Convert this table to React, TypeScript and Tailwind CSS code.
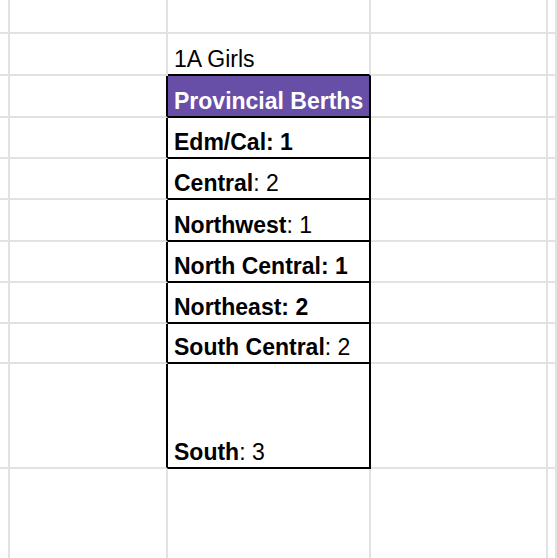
type Entry = { bold: string; rest?: string };

const ROW_HEIGHTS = [34, 42, 42, 41, 41, 42, 41, 41, 40, 105, 100];

const entries: Entry[] = [
  { bold: "Edm/Cal: 1" },
  { bold: "Central", rest: ": 2" },
  { bold: "Northwest", rest: ": 1" },
  { bold: "North Central: 1" },
  { bold: "Northeast: 2" },
  { bold: "South Central", rest: ": 2" },
  { bold: "South", rest: ": 3" },
];

const rowClass = [
  "h-[34px]",
  "h-[42px]",
  "h-[42px]",
  "h-[41px]",
  "h-[41px]",
  "h-[42px]",
  "h-[41px]",
  "h-[41px]",
  "h-[40px]",
  "h-[105px]",
  "h-[100px]",
];

function Cell({ className = "", children }: { className?: string; children?: React.ReactNode }) {
  return (
    <div className={`flex items-end border-r-2 border-b-2 border-[#e2e2e3] ${className}`}>
      {children}
    </div>
  );
}

export default function App() {
  return (
    <div className="h-[558px] w-[557px] overflow-hidden bg-white font-['Liberation_Sans',Arial,sans-serif] text-[23px] leading-none text-black">
      {ROW_HEIGHTS.map((_, i) => {
        const inTable = i >= 2 && i <= 9;
        const entry = i >= 3 && i <= 9 ? entries[i - 3] : null;
        return (
          <div key={i} className={`grid grid-cols-[10px_158px_203px_177px_1fr] ${rowClass[i]}`}>
            <Cell />
            <Cell className={inTable ? "!border-r-black" : ""} />
            <Cell
              className={[
                "pb-[3px] pl-[6px]",
                i >= 1 && i <= 9 ? "!border-b-black" : "",
                inTable ? "!border-r-black" : "",
                i === 2 ? "bg-[#674ea7] font-bold text-white" : "",
              ].join(" ")}
            >
              {i === 1 && <span>1A Girls</span>}
              {i === 2 && <span>Provincial Berths</span>}
              {entry && (
                <span>
                  <span className="font-bold">{entry.bold}</span>
                  {entry.rest}
                </span>
              )}
            </Cell>
            <Cell />
            <Cell />
          </div>
        );
      })}
    </div>
  );
}
